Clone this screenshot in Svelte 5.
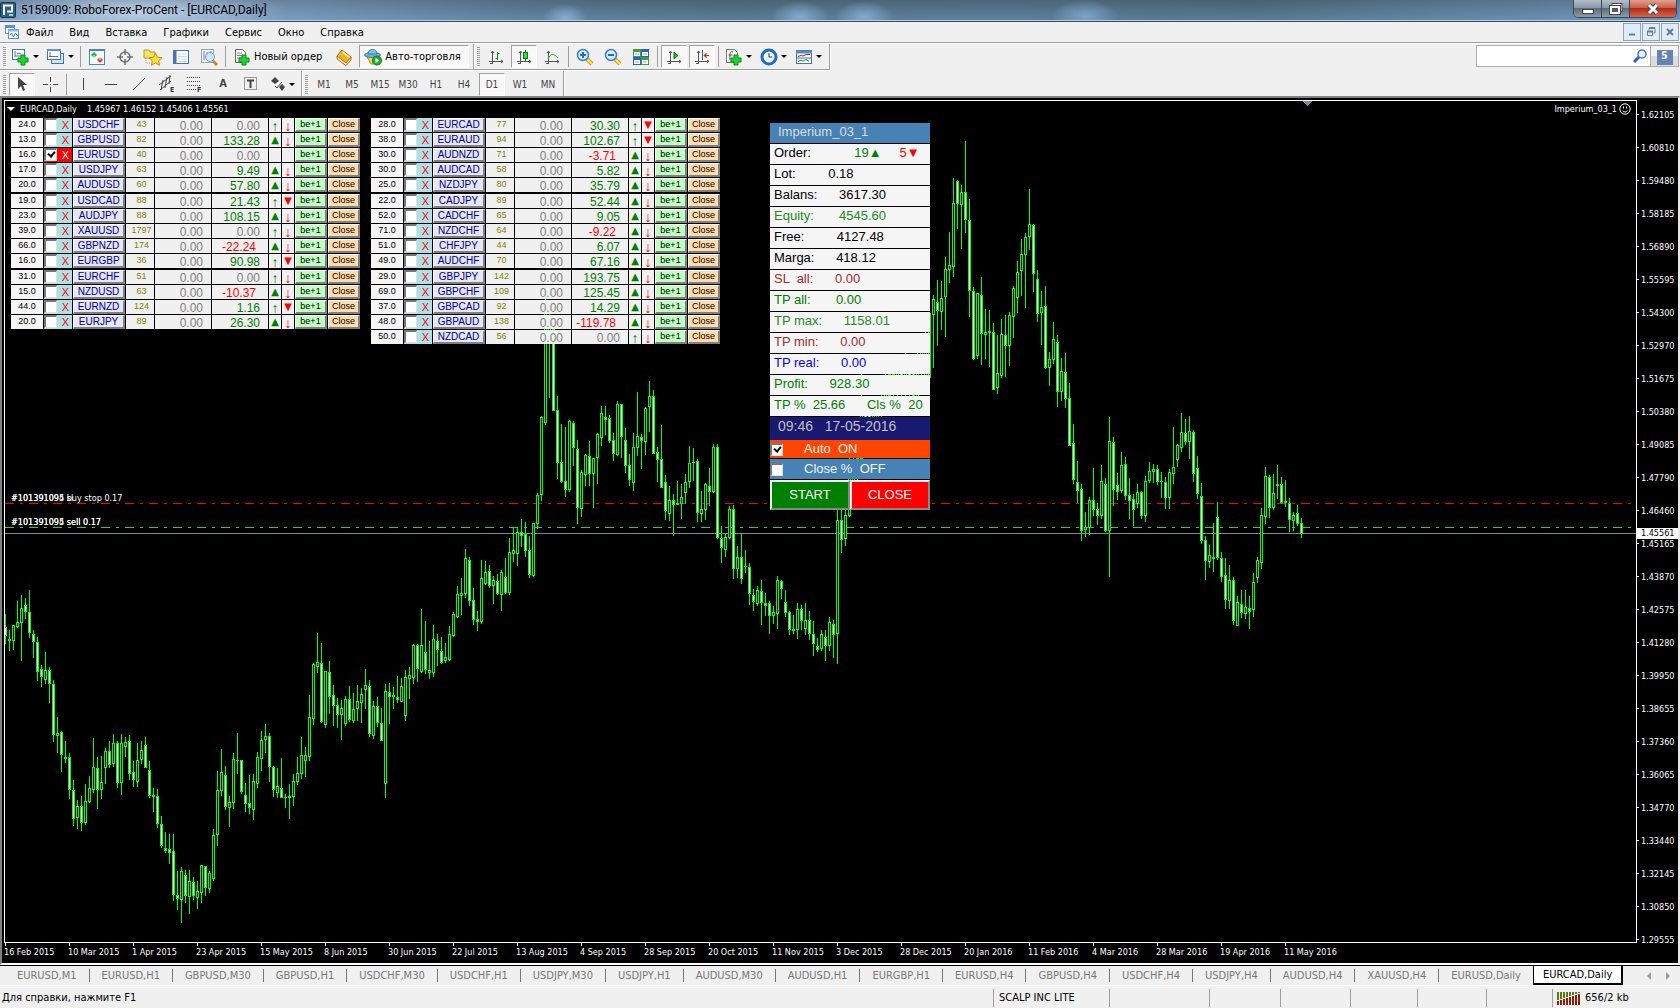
<script lang="ts">
  type Pair = {
    dist: string;
    name: string;
    spread: number;
    profit: string;
    buy: boolean;
    sell: boolean;
    checked?: boolean;
  };

  // dist, symbol, spread, profit, arrows: B = buy open, S = sell open, - = none
  const parse = (src: string): Pair[] =>
    src
      .trim()
      .split("\n")
      .map((line) => {
        const [dist, name, spread, profit, side] = line.trim().split(" ");
        return {
          dist,
          name,
          spread: Number(spread),
          profit,
          buy: side === "B",
          sell: side === "S",
          checked: side === "x",
        };
      });

  const left = parse(`
    24.0 USDCHF 43 0.00 -
    13.0 GBPUSD 82 133.28 B
    16.0 EURUSD 40 0.00 x
    17.0 USDJPY 63 9.49 B
    20.0 AUDUSD 60 57.80 B
    19.0 USDCAD 88 21.43 S
    23.0 AUDJPY 88 108.15 B
    39.0 XAUUSD 1797 0.00 -
    66.0 GBPNZD 174 -22.24 B
    16.0 EURGBP 36 90.98 S
    31.0 EURCHF 51 0.00 -
    15.0 NZDUSD 63 -10.37 B
    44.0 EURNZD 124 1.16 S
    20.0 EURJPY 89 26.30 B`);
  const right = parse(`
    28.0 EURCAD 77 30.30 S
    38.0 EURAUD 94 102.67 S
    30.0 AUDNZD 71 -3.71 B
    30.0 AUDCAD 58 5.82 B
    25.0 NZDJPY 80 35.79 B
    22.0 CADJPY 89 52.44 B
    52.0 CADCHF 65 9.05 B
    71.0 NZDCHF 64 -9.22 B
    51.0 CHFJPY 44 6.07 B
    49.0 AUDCHF 70 67.16 B
    29.0 GBPJPY 142 193.75 B
    69.0 GBPCHF 109 125.45 B
    37.0 GBPCAD 92 14.29 B
    48.0 GBPAUD 138 -119.78 B
    50.0 NZDCAD 56 0.00 -`);
  const tables = [left, right];

  const stats = [
    { text: "Lot:         0.18", color: "black" },
    { text: "Balans:      3617.30", color: "black" },
    { text: "Equity:       4545.60", color: "forest" },
    { text: "Free:         4127.48", color: "black" },
    { text: "Marga:      418.12", color: "black" },
    { text: "SL  all:      0.00", color: "brown" },
    { text: "TP all:       0.00", color: "green" },
    { text: "TP max:      1158.01", color: "forest" },
    { text: "TP min:      0.00", color: "brown" },
    { text: "TP real:      0.00", color: "blue" },
    { text: "Profit:      928.30", color: "green" },
    { text: "TP %  25.66      Cls %  20", color: "green" },
  ];

  const menu = ["Файл", "Вид", "Вставка", "Графики", "Сервис", "Окно", "Справка"];
  const frames = ["M1", "M5", "M15", "M30", "H1", "H4", "D1", "W1", "MN"];
  const tabs = [
    "EURUSD,M1", "EURUSD,H1", "GBPUSD,M30", "GBPUSD,H1", "USDCHF,M30", "USDCHF,H1",
    "USDJPY,M30", "USDJPY,H1", "AUDUSD,M30", "AUDUSD,H1", "EURGBP,H1", "EURUSD,H4",
    "GBPUSD,H4", "USDCHF,H4", "USDJPY,H4", "AUDUSD,H4", "XAUUSD,H4", "EURUSD,Daily",
    "EURCAD,Daily",
  ];
  const prices = [
    "1.62105", "1.60810", "1.59480", "1.58185", "1.56890", "1.55595", "1.54300",
    "1.52970", "1.51675", "1.50380", "1.49085", "1.47790", "1.46460", "1.45165",
    "1.43870", "1.42575", "1.41280", "1.39950", "1.38655", "1.37360", "1.36065",
    "1.34770", "1.33440", "1.32145", "1.30850", "1.29555",
  ];
  const dates = [
    "16 Feb 2015", "10 Mar 2015", "1 Apr 2015", "23 Apr 2015", "15 May 2015",
    "8 Jun 2015", "30 Jun 2015", "22 Jul 2015", "13 Aug 2015", "4 Sep 2015",
    "28 Sep 2015", "20 Oct 2015", "11 Nov 2015", "3 Dec 2015", "28 Dec 2015",
    "20 Jan 2016", "11 Feb 2016", "4 Mar 2016", "28 Mar 2016", "19 Apr 2016",
    "11 May 2016",
  ];
  const cells = [100, 71, 70, 67, 69, 66];

  // high, body top, body bottom, low, 1 = falling bar
  const history = `
614 627 636 644 1,630 639 641 651 0,625 625 641 650 0,601 622 627 628 0,595 608 623 661 0
598 605 612 619 1,590 612 633 638 1,630 634 642 658 1,637 642 672 681 1,665 669 677 687 1
652 670 680 684 0,667 670 684 703 1,680 684 735 742 1,717 733 736 753 0,731 732 755 772 1
741 757 759 763 0,753 757 790 799 1,780 790 819 826 1,800 806 818 829 0,796 806 823 831 1
784 801 823 825 0,776 788 802 803 0,738 767 790 793 0,757 768 790 809 1,756 782 790 799 0
748 751 768 784 0,741 751 765 768 1,734 743 764 767 0,741 743 783 788 1,734 743 783 795 0
737 742 747 757 0,735 741 774 780 1,761 772 780 787 1,743 760 782 787 0,741 750 760 764 0
737 745 768 768 1,761 770 796 798 1,788 795 797 812 0,789 796 824 828 1,816 824 846 848 1
832 848 851 853 1,834 849 853 864 1,834 851 895 901 1,871 895 899 910 1,867 871 900 923 0
870 875 896 903 1,870 881 897 914 0,877 882 896 900 1,881 891 898 909 0,865 865 893 903 0
866 866 888 896 1,871 873 889 893 0,829 835 879 881 0,771 790 835 846 0,749 772 791 796 0
766 775 807 810 1,796 802 808 827 0,753 759 803 809 0,733 760 761 774 0,760 760 792 794 1
783 795 804 812 1,775 803 808 814 1,774 781 810 820 0,752 757 784 788 0,731 740 759 771 0
724 736 740 753 0,733 736 767 782 1,766 767 790 797 1,768 786 793 798 0,758 788 798 798 1
794 797 798 808 0,784 796 798 819 0,774 781 797 806 0,757 773 782 785 0,737 755 774 779 0
747 755 761 777 0,695 717 757 761 0,663 664 719 725 0,633 662 667 673 0,643 663 722 723 1
671 671 725 728 0,661 672 697 714 1,685 695 706 726 1,698 705 715 728 1,700 708 715 740 0
696 699 724 726 0,686 699 720 722 1,693 709 721 723 0,685 701 709 721 0,688 694 703 723 0
669 685 690 709 0,680 686 734 737 1,701 706 736 739 0,697 706 723 727 1,708 723 741 741 1
684 691 784 798 0,683 692 697 724 1,687 695 697 709 0,676 697 700 703 1,678 686 702 702 0
670 677 716 721 0,667 675 679 699 0,644 645 678 684 0,644 645 669 682 1,609 645 672 673 0
621 652 670 674 1,641 670 673 679 0,625 639 673 677 0,634 641 650 666 1,637 651 663 664 1
643 657 661 663 0,626 634 660 661 0,612 614 636 637 0,586 594 617 618 0,578 593 596 615 0
549 558 594 598 0,557 560 601 606 1,588 600 620 625 1,611 619 622 631 1,560 578 622 624 0
561 572 584 585 0,565 571 586 588 1,576 580 586 604 0,574 581 594 595 1,570 572 595 611 0
558 577 593 594 1,538 552 593 595 0,527 550 554 562 0,527 532 554 566 0,519 532 536 547 1
522 534 551 557 1,536 550 575 578 1,523 523 576 577 0,493 495 524 529 0,416 417 495 501 0
299 312 423 425 0,312 315 340 398 0,318 329 411 411 1,396 410 463 479 1,424 462 482 483 1
427 481 490 497 1,420 421 490 492 0,421 423 448 466 1,440 449 508 524 1,470 472 509 517 0
454 455 475 486 0,441 456 474 486 1,458 458 474 508 0,433 434 458 484 0,406 413 438 446 0
406 417 420 435 1,415 418 441 443 1,433 440 454 461 1,401 404 455 456 0,404 404 437 458 1
428 440 466 473 1,454 465 480 486 1,433 447 483 491 0,392 436 448 456 0,434 437 441 469 1
407 408 442 455 0,381 396 407 432 0,390 396 454 454 1,447 452 460 482 1,425 459 488 488 1
475 482 511 520 1,486 500 514 521 0,494 500 505 536 1,481 503 505 505 0,484 497 504 519 0
474 482 493 504 0,446 463 482 488 0,448 462 463 481 0,459 461 513 522 1,491 509 514 522 0
483 484 510 520 0,468 486 492 506 1,444 447 492 493 0,444 447 538 539 1,526 538 548 563 1
533 537 550 557 0,506 509 538 539 0,505 509 569 579 1,546 557 569 578 0,533 557 579 584 1
550 566 567 573 0,563 567 594 605 1,589 595 602 611 1,586 590 604 606 0,580 591 603 625 1
593 603 606 616 1,601 603 616 634 1,606 612 616 624 0,576 580 614 629 0,580 581 589 599 1
590 602 613 617 1,611 612 630 635 1,615 629 631 634 0,603 609 630 639 0,605 609 621 630 1
603 620 629 635 0,611 620 634 640 1,621 634 644 656 1,638 646 650 652 1,630 634 649 651 0
630 637 646 661 1,617 622 646 651 0,620 624 635 658 1,505 520 634 664 0,500 520 540 553 1
508 515 539 546 0,450 478 516 517 0,457 460 483 490 0,456 458 470 480 1,372 414 459 470 0
408 412 430 440 1,405 414 428 436 1,402 410 426 432 0,397 404 418 425 0,392 398 416 424 1
370 376 404 412 0,371 374 396 403 1,366 374 392 398 0,368 373 390 396 0,360 372 388 397 1
352 370 392 400 0,356 366 390 396 1,362 372 396 404 1,350 360 398 409 0,346 352 372 395 0
330 340 378 392 0,313 313 378 378 0,295 299 315 368 0,280 302 311 346 1,281 298 312 330 0
257 269 297 337 0,232 265 270 283 0,178 203 267 277 0,180 181 204 229 1,185 192 205 249 0
141 192 220 233 1,199 220 291 317 1,287 291 359 360 1,293 293 356 359 0,277 295 334 365 1
309 332 335 359 0,310 331 333 367 1,323 332 390 390 1,335 373 388 394 0,319 334 376 378 0
315 335 346 377 1,312 315 346 366 0,286 288 317 338 0,261 272 298 313 0,239 254 271 296 0
233 237 255 308 0,189 224 237 250 0,224 225 274 292 1,270 279 314 322 1,291 307 313 345 0
286 306 368 369 1,352 359 368 386 0,322 339 360 364 0,335 342 392 407 1,358 371 392 401 0
353 372 399 408 1,383 398 446 446 1,424 443 480 484 1,461 482 491 503 1,484 489 531 541 1
512 527 530 537 0,497 500 528 535 0,468 500 510 516 1,503 509 516 525 1,465 481 516 519 0
478 484 531 532 1,417 441 531 577 0,437 442 490 506 1,473 485 492 500 1,452 465 491 493 0
457 464 496 500 1,478 495 501 519 1,494 499 510 526 1,484 492 504 508 0,491 492 516 519 1
476 481 516 522 0,462 471 481 483 0,464 469 472 483 0,465 469 482 485 1,472 481 482 498 0
477 482 498 509 1,469 472 498 509 0,427 467 474 484 0,444 445 460 467 0,413 432 448 452 0
419 433 442 445 1,416 431 442 459 0,430 432 474 482 1,456 468 494 499 1,483 496 541 544 1
536 540 561 580 1,545 555 562 568 0,523 557 559 572 0,502 517 558 560 1,552 558 577 582 1
558 575 600 609 1,565 580 601 609 0,577 580 621 625 1,596 602 626 626 0,590 604 613 618 1
590 607 614 619 0,596 608 612 629 1,573 582 610 617 0,557 560 578 583 0,508 515 563 569 0
467 476 517 524 0,475 477 508 518 1,474 493 508 510 0,465 484 486 499 0,477 484 503 504 1
480 501 503 507 0,498 503 520 532 1,512 515 521 531 0,505 513 524 526 1,518 523 534 538 1`;
  const top = 101;
  const candles = history
    .trim()
    .split(/[,\n]/)
    .map((c, i) => {
      const [high, open, close, low, down] = c.split(" ").map(Number);
      return { x: i * 4, high: high - top, open: open - top, close: close - top, low: low - top, down };
    });

  let auto = $state(true);
  let closePct = $state(false);
  let frame = $state("D1");
  let tab = $state("EURCAD,Daily");

  const tone = (p: string) => (p === "0.00" ? "zero" : p.startsWith("-") ? "loss" : "gain");
</script>

{#snippet axes()}
  <path d="M4.5 2v13M1 12.500h14M3 4l1.500-2 1.500 2M13 11l2 1.500-2 1.500M2 14.500h2" fill="none" stroke="#555" />
{/snippet}

{#snippet plus()}
  <path d="M9 7h4v3h3v4h-3v3H9v-3H6v-4h3z" fill="#1fd42f" stroke="#078a12" />
{/snippet}

<div class="app">
  <header class="title">
    <svg width="16" height="18" viewBox="0 0 16 18">
      <rect x="0.500" y="1.500" width="15" height="15" rx="1" fill="#2e6285" stroke="#163a55" />
      <path d="M4 14V4.500h8v6H7" fill="none" stroke="#fff" stroke-width="2" />
      <path d="M9 14h4" stroke="#9cc" stroke-width="2" />
    </svg>
    <h1>5159009: RoboForex-ProCent - [EURCAD,Daily]</h1>
    <div class="sysbuttons">
      <button aria-label="Minimize">
        <svg width="12" height="12"><rect x="0.500" y="6.500" width="11" height="4" fill="#fff" stroke="#445" /></svg>
      </button>
      <button aria-label="Restore">
        <svg width="14" height="12">
          <rect x="4" y="1.500" width="8" height="6" fill="none" stroke="#445" stroke-width="3" />
          <rect x="4" y="1.500" width="8" height="6" fill="none" stroke="#fff" />
          <rect x="2" y="4" width="8" height="6" fill="#667" stroke="#445" stroke-width="4" />
          <rect x="2" y="4" width="8" height="6" fill="#556" stroke="#fff" stroke-width="2" />
        </svg>
      </button>
      <button class="quit" aria-label="Close window">
        <svg width="14" height="12">
          <path d="M3 2l8 8M11 2l-8 8" stroke="#445" stroke-width="5" />
          <path d="M3 2l8 8M11 2l-8 8" stroke="#fff" stroke-width="3" />
        </svg>
      </button>
    </div>
  </header>

  <nav class="menubar">
    <svg width="16" height="16">
      <rect x="1.500" y="1.500" width="9" height="8" fill="#fff" stroke="#5b8fd6" />
      <path d="M1 3h10" stroke="#5b8fd6" stroke-width="2" />
      <rect x="4.500" y="5.500" width="10" height="9" fill="#fff" stroke="#5b8fd6" />
      <path d="M4 6.500h11" stroke="#8cb4ea" stroke-width="2" />
      <path d="M6 11l1.500-2 2 4 2-4 2 3" fill="none" stroke="#3a72c4" />
    </svg>
    {#each menu as item}
      <button>{item}</button>
    {/each}
    <div class="mdi">
      <button aria-label="Minimize chart"><svg width="10" height="10"><path d="M2 7.500h6" stroke="#6c7d8c" stroke-width="2" /></svg></button>
      <button aria-label="Restore chart">
        <svg width="10" height="10">
          <path d="M3 3V1.500h6V6H7.500M1.500 4.500h5v4h-5z" fill="none" stroke="#6c7d8c" />
          <path d="M3 1h6M1 4.500h6" stroke="#6c7d8c" stroke-width="2" />
        </svg>
      </button>
      <button aria-label="Close chart"><svg width="10" height="10"><path d="M2 2l6 6M8 2L2 8" stroke="#6c7d8c" stroke-width="2" /></svg></button>
    </div>
  </nav>

  <div class="tools">
    <div class="bars">
      <div class="bar">
        <i class="grip"></i>
        <button class="drop" aria-label="New chart">
          <svg width="18" height="18">
            <rect x="0.500" y="1.500" width="12" height="10" fill="#fff" stroke="#3f77b5" />
            <path d="M3 3v6M3 8h8M5 6l2-1 2 1" stroke="#579" fill="none" />
            {@render plus()}
          </svg>
        </button>
        <button class="drop" aria-label="Profiles">
          <svg width="18" height="18">
            <rect x="4.500" y="5.500" width="12" height="10" fill="#cfe2f7" stroke="#3f77b5" />
            <rect x="0.500" y="1.500" width="13" height="10" fill="#fff" stroke="#3f77b5" />
            <path d="M0 2h14" stroke="#5d96d3" stroke-width="2" />
            <path d="M3 4v5M2 8.500h9" stroke="#579" />
          </svg>
        </button>
        <i class="sep"></i>
        <button aria-label="Market Watch">
          <svg width="18" height="18">
            <rect x="1.500" y="1.500" width="15" height="15" fill="#f5faff" stroke="#4a86c5" />
            <path d="M1 2h16" stroke="#4a86c5" stroke-width="2" />
            <path d="M6 4l3 3-3 3-3-3z" fill="#1eb32a" />
            <path d="M12 9l3 3-3 3-3-3z" fill="#e0402a" />
            <path d="M6 7v3M12 9v3" stroke="#fff" />
          </svg>
        </button>
        <button aria-label="Data Window">
          <svg width="18" height="18">
            <circle cx="9" cy="9" r="5" fill="none" stroke="#707070" stroke-width="1.500" />
            <path d="M9 1v6M9 11v6M1 9h6M11 9h6" stroke="#707070" stroke-width="1.500" />
          </svg>
        </button>
        <button aria-label="Navigator">
          <svg width="20" height="18">
            <path d="M1 2h5l1 2h5v6H1z" fill="#fbe36a" stroke="#c49a1c" />
            <path d="M3 10v5h5" stroke="#999" fill="none" stroke-dasharray="1 1" />
            <path d="M12.500 5l2 4.200 4.500.5-3.300 3.100.9 4.500-4.100-2.300-4.100 2.300.9-4.500L6 9.700l4.500-.5z" fill="#ffdf3c" stroke="#c48c0c" />
          </svg>
        </button>
        <button aria-label="Terminal">
          <svg width="18" height="18">
            <rect x="1.500" y="2.500" width="15" height="13" fill="#fff" stroke="#3f77b5" />
            <path d="M3 2.500v13" stroke="#3f77b5" stroke-width="3" />
            <path d="M6 6h9M6 8.500h9M6 11h9M6 13.500h9" stroke="#ccd9ea" />
            <path d="M2.500 5h1M2.500 8h1" stroke="#e44" />
          </svg>
        </button>
        <button aria-label="Strategy Tester">
          <svg width="18" height="18">
            <rect x="1.500" y="1.500" width="12" height="13" fill="#f2f2f2" stroke="#9aa" />
            <path d="M4 3v9M7 4v6M11 3v8" stroke="#789" />
            <path d="M13 13l4 4" stroke="#c98a1e" stroke-width="3" />
            <circle cx="10" cy="9" r="4.500" fill="#cfe6fb" fill-opacity=".85" stroke="#6c9fd0" />
          </svg>
        </button>
        <i class="sep"></i>
        <button class="wide">
          <svg width="18" height="18">
            <path d="M2.500 1.500h7l3 3v10h-10z" fill="#fff" stroke="#666" />
            <path d="M4 5h5M4 7.500h6M4 10h5" stroke="#888" />
            {@render plus()}
          </svg>
          Новый ордер
        </button>
        <button aria-label="MetaEditor">
          <svg width="18" height="18">
            <path d="M2 8v3l9 6.500 5-5.500V9" fill="#fff1c4" stroke="#a8700e" />
            <path d="M7 2l9 7-5 6-9-7z" fill="#eeb02c" stroke="#a8700e" />
            <path d="M7.500 4l7 5.500" stroke="#ffe28a" stroke-width="2" />
          </svg>
        </button>
        <button class="wide pressed">
          <svg width="18" height="18">
            <path d="M2 7h13l-5 9H7z" fill="#f7cf52" stroke="#b98a18" />
            <ellipse cx="8.500" cy="7" rx="8" ry="2.500" fill="#6ab0dc" stroke="#3a7dab" />
            <path d="M4 6c0-6 9-6 9 0z" fill="#7fc0e8" stroke="#3a7dab" />
            <circle cx="13" cy="12.500" r="4.500" fill="#22b02c" stroke="#0c7a15" />
            <path d="M11.500 10l4 2.500-4 2.500z" fill="#fff" />
          </svg>
          Авто-торговля
        </button>
      </div>
      <div class="bar">
        <i class="grip"></i>
        <button aria-label="Bar chart">
          <svg width="16" height="16">{@render axes()}<path d="M9.500 3v8M9.500 4.500h2M7.500 9.500h2" stroke="#0a8a12" /></svg>
        </button>
        <button class="pressed" aria-label="Candlesticks">
          <svg width="16" height="16">{@render axes()}<path d="M9.500 1v11" stroke="#0a7a12" /><rect x="7.500" y="3.500" width="4" height="6" fill="#2fe040" stroke="#0a7a12" /></svg>
        </button>
        <button aria-label="Line chart">
          <svg width="16" height="16">{@render axes()}<path d="M4 10c3-6 5-6 10-1" fill="none" stroke="#2a9a32" /></svg>
        </button>
        <i class="sep"></i>
        <button aria-label="Zoom in">
          <svg width="18" height="18"><path d="M11 11l5 5" stroke="#c9a012" stroke-width="4" /><path d="M11 11l5 5" stroke="#ffe36a" stroke-width="2" /><circle cx="7" cy="7" r="5.500" fill="#d4ecff" stroke="#3b7fc4" stroke-width="1.500" /><path d="M4 7h6M7 4v6" stroke="#2a6cb4" stroke-width="2" /></svg>
        </button>
        <button aria-label="Zoom out">
          <svg width="18" height="18"><path d="M11 11l5 5" stroke="#c9a012" stroke-width="4" /><path d="M11 11l5 5" stroke="#ffe36a" stroke-width="2" /><circle cx="7" cy="7" r="5.500" fill="#d4ecff" stroke="#3b7fc4" stroke-width="1.500" /><path d="M4 7h6" stroke="#2a6cb4" stroke-width="2" /></svg>
        </button>
        <button aria-label="Tile windows">
          <svg width="16" height="16">
            <path d="M0 0h8v8H0zM8 8h8v8H8z" fill="#3fa02c" /><path d="M8 0h8v8H8zM0 8h8v8H0z" fill="#2a62c8" />
            <path d="M1 3h6v4H1zM9 3h6v4H9zM1 11h6v4H1zM9 11h6v4H9z" fill="#fff" />
            <path d="M2 5h4M10 5h4M2 13h4M10 13h4" stroke="#9ac" />
          </svg>
        </button>
        <i class="sep"></i>
        <button class="pressed" aria-label="Auto scroll">
          <svg width="16" height="16">{@render axes()}<path d="M8 3v7l4-3.500z" fill="#1fc02c" stroke="#0a7a12" /></svg>
        </button>
        <button class="pressed" aria-label="Chart shift">
          <svg width="16" height="16">{@render axes()}<path d="M8.500 1v10" stroke="#25629c" /><path d="M10 6.500h5M12.500 4l-2.500 2.500 2.500 2.500" stroke="#d03010" fill="#d03010" /></svg>
        </button>
        <i class="sep"></i>
        <button class="drop" aria-label="Indicators">
          <svg width="18" height="18">
            <path d="M1.500 1.500h8l3 3v10h-11z" fill="#fff" stroke="#777" />
            <path d="M8 4c-2-1-3 0-3 2v6M3.500 7h4" fill="none" stroke="#555" />
            {@render plus()}
          </svg>
        </button>
        <button class="drop" aria-label="Periods">
          <svg width="18" height="18"><circle cx="9" cy="9" r="7" fill="#eef6ff" stroke="#1e6cc0" stroke-width="3" /><path d="M9 5v4h3" fill="none" stroke="#333" /></svg>
        </button>
        <button class="drop" aria-label="Templates">
          <svg width="18" height="18">
            <rect x="1.500" y="2.500" width="15" height="13" fill="#fff" stroke="#3f77b5" />
            <path d="M1 4h16" stroke="#4f8dd0" stroke-width="3" /><path d="M2 10h14" stroke="#3f77b5" />
            <path d="M3 8.500l3-1 2 .5 3-1.500h4" fill="none" stroke="#a02818" /><path d="M3 14l3-2 2 1 3-1.500 3 2" fill="none" stroke="#1a8a2a" />
          </svg>
        </button>
      </div>
    </div>
    <div class="bars second">
      <div class="bar">
        <i class="grip"></i>
        <button class="pressed" aria-label="Cursor"><svg width="16" height="16"><path d="M4 1v12l3-3 2 5 2-1-2-5h4z" fill="#444" /></svg></button>
        <button aria-label="Crosshair"><svg width="16" height="16"><path d="M8.500 1v5M8.500 11v5M1 8.500h5M11 8.500h5M8 8.500h1" stroke="#444" /></svg></button>
        <i class="sep"></i>
        <button aria-label="Vertical line"><svg width="16" height="16"><path d="M8.500 2v12" stroke="#444" /></svg></button>
        <button aria-label="Horizontal line"><svg width="16" height="16"><path d="M2 8.500h12" stroke="#444" /></svg></button>
        <button aria-label="Trend line"><svg width="16" height="16"><path d="M2 14L14 2" stroke="#444" /></svg></button>
        <button aria-label="Channel">
          <svg width="18" height="18">
            <path d="M1 10L13 1M2 15L13 6M5 5l-2 10M9 2L7 13M12 0l-1 9" stroke="#444" />
            <text x="12" y="17">E</text>
          </svg>
        </button>
        <button aria-label="Fibonacci">
          <svg width="18" height="18">
            <path d="M1 2.500h14M1 6.500h14M1 10.500h14M1 14.500h9" stroke="#444" stroke-dasharray="1 1" />
            <text x="11" y="17">F</text>
          </svg>
        </button>
        <button class="glyph">A</button>
        <button aria-label="Text label">
          <svg width="16" height="16">
            <rect x="1.500" y="1.500" width="12" height="12" fill="none" stroke="#444" stroke-dasharray="1 1" />
            <path d="M4 4.500h7M7.500 4v8" stroke="#444" stroke-width="2" />
          </svg>
        </button>
        <button class="drop" aria-label="Arrows">
          <svg width="16" height="16"><path d="M5 1l4 4-4 3-4-3zM12 8l3 3-3 4-3-4z" fill="#444" /><path d="M5 10l2 2 5-6" fill="none" stroke="#444" /></svg>
        </button>
      </div>
      <div class="bar">
        <i class="grip"></i>
        {#each frames as f}
          <button class="period" class:pressed={f === frame} onclick={() => (frame = f)}>{f}</button>
        {/each}
      </div>
    </div>
    <div class="search">
      <input type="text" aria-label="Search" />
      <svg width="14" height="14"><path d="M1 13l5-5" stroke="#2a5ad0" stroke-width="3" /><circle cx="9" cy="5" r="4" fill="#eaf3ff" stroke="#3a78d8" stroke-width="1.500" /></svg>
      <button aria-label="Messages"><b>5</b></button>
    </div>
  </div>

  <main class="chart">
    <div class="plot">
      <svg class="canvas" width="100%" height="100%" shape-rendering="crispEdges">
        <path d="M1298 0h9l-4.500 5z" fill="#778899" />
        <rect y="432" width="100%" height="1" fill="#778899" />
        <line x1="0" x2="100%" y1="402.500" y2="402.500" stroke="#ff0000" stroke-dasharray="9 6 3 6" />
        <line x1="0" x2="100%" y1="426.500" y2="426.500" stroke="#32cd32" stroke-dasharray="9 6 3 6" />
        {#each candles as c}
          <rect x={c.x} y={c.high} width="1" height={c.low - c.high} fill="#0f0" />
          <rect x={c.x - 1} y={c.open} width="3" height={Math.max(c.close - c.open, 1)} fill="#0f0" />
          {#if c.close - c.open > 2}
            <rect x={c.x} y={c.open + 1} width="1" height={c.close - c.open - 2} fill={c.down ? "#fff" : "#000"} />
          {/if}
        {/each}
        <g fill="#fff">
          <text x="6" y="400">#101391094 sl</text>
          <text x="6" y="400">#101391095 buy stop 0.17</text>
          <text x="6" y="424">#101391094 sell 0.17</text>
          <text x="6" y="424">#101391095 sell 0.17</text>
        </g>
      </svg>

      <div class="caption">
        <span class="tri"></span>
        <span>EURCAD,Daily&nbsp;&nbsp;&nbsp; 1.45967 1.46152 1.45406 1.45561</span>
        <span class="expert">Imperium_03_1</span>
        <svg width="12" height="12" fill="none" stroke="#fff"><circle cx="6" cy="6" r="5.200" /><path d="M3.500 7.500c1 2 4 2 5 0M4.500 3.500v2M7.500 3.500v2" /></svg>
      </div>

      <div class="overlay">
        {#each tables as rows}
          <table>
            <colgroup>
              <col class="w32" /><col class="w28" /><col class="w52" /><col class="w28" /><col class="w56" />
              <col class="w56" /><col class="w12" /><col class="w12" /><col class="w32" /><col class="w32" />
            </colgroup>
            <tbody>
              {#each rows as r (r.name)}
                <tr class:on={r.checked}>
                  <td class="dist">{r.dist}</td>
                  <td>
                    <div class="pick">
                      <input type="checkbox" bind:checked={r.checked} aria-label={r.name} />
                      <button>X</button>
                    </div>
                  </td>
                  <td><button class="sym">{r.name}</button></td>
                  <td class="spread">{r.spread}</td>
                  <td class="num zero">0.00</td>
                  <td class="num {tone(r.profit)}">{r.profit}</td>
                  <td class="arr up" class:big={r.buy}>{r.checked ? "" : r.buy ? "▲" : "↑"}</td>
                  <td class="arr down" class:big={r.sell}>{r.checked ? "" : r.sell ? "▼" : "↓"}</td>
                  <td><button class="be">be+1</button></td>
                  <td><button class="cls">Close</button></td>
                </tr>
              {/each}
            </tbody>
          </table>
        {/each}

        <section class="panel">
          <h2>Imperium_03_1</h2>
          <p>{"Order:            "}<span class="green">19▲</span>{"     "}<span class="red">5▼</span></p>
          {#each stats as s}
            <p class={s.color}>{s.text}</p>
          {/each}
          <time>{"09:46   17-05-2016"}</time>
          <label class="auto"><input type="checkbox" bind:checked={auto} /><span>{"Auto  " + (auto ? "ON" : "OFF")}</span></label>
          <label class="pct"><input type="checkbox" bind:checked={closePct} /><span>{"Close %  " + (closePct ? "ON" : "OFF")}</span></label>
          <div class="actions">
            <button class="start">START</button>
            <button class="stop">CLOSE</button>
          </div>
        </section>
      </div>
    </div>

    <ul class="prices">
      {#each prices as p}
        <li>{p}</li>
      {/each}
    </ul>
    <span class="now">1.45561</span>

    <ul class="dates">
      {#each dates as d}
        <li>{d}</li>
      {/each}
    </ul>
  </main>

  <nav class="tabs">
    {#each tabs as t}
      <button class:active={t === tab} onclick={() => (tab = t)}>{t}</button>
    {/each}
    <div class="scroll">
      <svg width="5" height="8"><path d="M4 0v8L0 4z" fill="#999" /></svg>
      <svg width="5" height="8"><path d="M0 0v8l4-4z" fill="#999" /></svg>
    </div>
  </nav>

  <footer>
    <span class="help">Для справки, нажмите F1</span>
    <span class="profile">SCALP INC LITE</span>
    {#each cells as w}
      <span style="width: {w}px"></span>
    {/each}
    <span class="net">
      <svg width="24" height="13" shape-rendering="crispEdges">
        {#each [0, 3, 6, 9, 12, 15, 18, 21] as x, i}
          <rect {x} y="0" width="2" height={8 - i} fill="#5a7a10" />
          <rect {x} y={9 - i} width="2" height={4 + i} fill="#9a1a08" />
        {/each}
      </svg>
      656/2 kb
    </span>
  </footer>
</div>

<style>
  :global(body) {
    background: #f0f0f0;
  }

  .app {
    display: flex;
    flex-direction: column;
    min-height: 100vh;
    overflow: hidden;
    background: #f0f0f0;
    color: #000;
    font: 11px/14px "DejaVu Sans Condensed", "DejaVu Sans", sans-serif;
  }

  button {
    margin: 0;
    padding: 0;
    border: 0;
    background: none;
    color: inherit;
    font: inherit;
  }

  ul,
  p,
  h1,
  h2 {
    margin: 0;
    padding: 0;
    list-style: none;
    font-weight: normal;
  }

  svg {
    display: block;
    flex: none;
  }

  .title {
    display: flex;
    align-items: center;
    gap: 5px;
    height: 20px;
    border-bottom: 1px solid #b8cbe0;
    box-shadow: 0 1px #3c4a5a;
    margin-bottom: 1px;
    background:
      radial-gradient(ellipse 150px 24px at 140px 12px, rgba(205, 222, 240, 0.8), transparent),
      radial-gradient(ellipse 22px 14px at 565px 18px, rgba(147, 185, 224, 0.8), transparent),
      radial-gradient(ellipse 30px 16px at 800px 17px, rgba(143, 182, 222, 0.8), transparent),
      radial-gradient(ellipse 30px 16px at 864px 17px, rgba(143, 182, 222, 0.8), transparent),
      radial-gradient(ellipse 34px 16px at 1085px 16px, rgba(134, 173, 214, 0.8), transparent),
      linear-gradient(rgba(60, 75, 85, 0.35), rgba(110, 150, 195, 0.35)),
      linear-gradient(90deg, #86a8cc, #7f9fc2 300px, #5d7c98 520px, #507080 720px, #56758f 1000px, #4d6c7c 1250px, #6e93b8 1600px);
  }

  h1 {
    font: 12px/18px Roboto, sans-serif;
  }

  .sysbuttons {
    display: flex;
    align-self: flex-start;
    margin: 0 3px 0 auto;
    border: 1px solid #3b4652;
    border-top: 0;
    border-radius: 0 0 5px 5px;
    overflow: hidden;
  }

  .sysbuttons button {
    display: grid;
    place-items: center;
    width: 28px;
    height: 17px;
    border-right: 1px solid #3b4652;
    background: linear-gradient(#b4bfca, #8b98a6 45%, #5f6d7c 50%, #8d9cab);
  }

  .sysbuttons .quit {
    width: 46px;
    border: 0;
    background: linear-gradient(#e0a090, #c9604c 45%, #b02a12 50%, #d8684a);
  }

  .menubar {
    display: flex;
    align-items: center;
    height: 20px;
    padding: 0 1px 0 4px;
    border-bottom: 1px solid #a0a0a0;
  }

  .menubar > svg {
    margin-right: -2px;
  }

  .menubar > button {
    padding: 1px 8px 0;
  }

  .mdi {
    display: flex;
    gap: 1px;
    margin-left: auto;
  }

  .mdi button {
    display: grid;
    place-items: center;
    width: 18px;
    height: 18px;
    border: 1px solid #8fa5b8;
    background: #dfebf7;
  }

  .tools {
    position: relative;
    border-top: 1px solid #fff;
  }

  .bars {
    display: flex;
    height: 27px;
  }

  .second {
    height: 25px;
  }

  .bar {
    display: flex;
    align-items: center;
    box-sizing: border-box;
    height: 26px;
    padding-right: 3px;
    border-right: 1px solid #a0a0a0;
    border-bottom: 1px solid #a0a0a0;
    box-shadow: 1px 1px #fff;
  }

  .second .bar {
    height: 25px;
    padding: 1px 1px 0 0;
    border-bottom: 0;
  }

  .grip {
    width: 3px;
    height: 19px;
    margin: 0 2px 0 3px;
    background: repeating-linear-gradient(#a0a0a0 0 1px, transparent 1px 2px);
  }

  .sep {
    width: 1px;
    height: 21px;
    margin: 0 2px;
    background: #a0a0a0;
  }

  .bar button {
    display: flex;
    align-items: center;
    justify-content: center;
    width: 26px;
    height: 23px;
    margin: 0 1px;
    box-sizing: border-box;
  }

  .bar .drop {
    width: 33px;
    gap: 3px;
  }

  .drop::after {
    content: "";
    border: 3px solid transparent;
    border-top-color: #000;
    border-bottom: 0;
  }

  .bar .wide {
    width: auto;
    gap: 3px;
    padding: 0 7px 0 4px;
  }

  .bar .pressed {
    border: 1px solid #a0a0a0;
    border-right-color: #fff;
    border-bottom-color: #fff;
    background: #f8f8f8;
  }

  .bar .glyph {
    color: #444;
    font-weight: bold;
  }

  .bar .period {
    padding-top: 1px;
    color: #444;
    font-size: 10px;
  }

  .bar text {
    font: bold 7px "DejaVu Sans Condensed", sans-serif;
    fill: #333;
  }

  .search {
    position: absolute;
    top: 1px;
    right: 1px;
    display: flex;
    align-items: center;
    border: 1px solid #adadad;
    background: #fff;
  }

  .search input {
    width: 156px;
    height: 20px;
    padding: 0;
    border: 0;
    outline: 0;
  }

  .search button {
    width: 28px;
    height: 20px;
    margin-left: 3px;
    border-left: 1px solid #adadad;
    background: linear-gradient(#f4f4f4 50%, #dcdcdc 50%);
  }

  .search b {
    display: block;
    width: 16px;
    margin: 0 auto;
    background: #6484b4;
    color: #fff;
    font: bold 10px/12px "DejaVu Sans Condensed", sans-serif;
  }

  .search b::after {
    content: "";
    display: block;
    width: 0;
    height: 0;
    margin: 0 0 -3px 3px;
    border: solid transparent;
    border-width: 0 0 3px 4px;
    border-top: 3px solid #6484b4;
    border-bottom: 0;
  }

  .chart {
    position: relative;
    flex: 1;
    display: grid;
    grid-template-columns: 1fr 41px;
    grid-template-rows: 1fr 20px;
    padding: 2px 0 0 2px;
    border: 2px solid #808080;
    border-right-color: #e8e8e8;
    border-bottom-color: #fff;
    background: #000;
    color: #fff;
    font-size: 9px;
  }

  .plot {
    position: relative;
    min-height: 720px;
    border: 1px solid #fff;
  }

  .canvas {
    position: absolute;
    inset: 0;
    overflow: hidden;
  }

  .caption {
    position: relative;
    display: flex;
    align-items: center;
    gap: 5px;
    height: 16px;
    padding: 0 5px 0 2px;
  }

  .expert {
    margin-left: auto;
  }

  .caption svg {
    margin-left: -3px;
  }

  .tri {
    border: 4px solid transparent;
    border-top-color: #fff;
    border-bottom: 0;
  }

  .overlay {
    position: relative;
    display: flex;
    align-items: flex-start;
    gap: 9px;
    padding-left: 5px;
    font-family: "Liberation Sans", Arial, sans-serif;
  }

  table {
    table-layout: fixed;
    width: 351px;
    border-spacing: 1px;
    color: #000;
    line-height: 11px;
  }

  .w12 { width: 12px; }
  .w28 { width: 28px; }
  .w32 { width: 32px; }
  .w52 { width: 52px; }
  .w56 { width: 56px; }

  td {
    height: 14px;
    padding: 0;
    box-sizing: border-box;
    overflow: hidden;
    background: #f0f0f0 padding-box;
    text-align: center;
    vertical-align: top;
    white-space: nowrap;
  }

  tr:nth-child(5n) td {
    height: 15px;
    border-bottom: 1px solid transparent;
  }

  tr:last-child td {
    height: 14px;
    border: 0;
  }

  td button {
    display: block;
    width: 100%;
    height: 14px;
    border: 1px solid #fff;
    border-right: 2px solid #808080;
    border-bottom: 2px solid #808080;
    line-height: 11px;
  }

  .dist {
    padding-top: 1px;
    background-color: #f5f5f5;
  }

  .pick {
    display: flex;
    background: #b0e0e6;
  }

  .pick button {
    flex: 1;
    padding-left: 2px;
    border: 0;
    color: #f00;
    font-size: 11px;
    line-height: 14px;
  }

  .on .pick {
    background: #f00;
  }

  .on .pick button {
    color: #fff;
  }

  input[type="checkbox"] {
    appearance: none;
    flex: none;
    width: 13px;
    height: 13px;
    margin: 0;
    border: 1px solid #e0e0e0;
    border-top: 2px solid #777;
    border-left: 2px solid #777;
    background: #fff;
  }

  input[type="checkbox"]:checked::after {
    content: "";
    display: block;
    width: 3px;
    height: 5px;
    margin: 0 0 0 3px;
    border: solid #000;
    border-width: 0 2px 2px 0;
    transform: rotate(40deg);
  }

  .sym {
    background: #e6e6fa;
    color: #000080;
    font-size: 10px;
  }

  .be {
    background: #bfffbf;
  }

  .cls {
    background: #ffdaab;
  }

  .spread {
    padding: 1px 0 0 3px;
    color: #808000;
  }

  .num {
    padding: 3px 8px 0 0;
    font-size: 12px;
    text-align: right;
  }

  .zero { color: #808080; }
  .gain { color: #008000; }
  .loss { padding-right: 12px; color: #f00; }

  .arr {
    padding-top: 3px;
    font-size: 14px;
  }

  .big {
    padding-top: 1px;
    font-family: "DejaVu Sans", sans-serif;
    font-size: 10px;
  }

  .up { color: #008000; }
  .down { color: #f00; }

  .panel {
    display: flex;
    flex-direction: column;
    gap: 1px;
    width: 160px;
    margin: 6px 0 0 40px;
    color: #000;
    font-size: 13px;
    line-height: 18px;
    white-space: pre;
  }

  .panel h2 {
    height: 20px;
    padding-left: 8px;
    background: #4682b4;
    color: #dcdcdc;
    font-size: 13px;
  }

  .panel p {
    height: 20px;
    padding-left: 4px;
    background: #f5f5f5;
  }

  .panel .green { color: #008000; }
  .panel .forest { color: #228b22; }
  .panel .brown { color: #a52a2a; }
  .panel .blue { color: #0000ff; }
  .panel .red { color: #f00; }

  time {
    height: 23px;
    margin-bottom: -1px;
    padding-left: 8px;
    background: #191970;
    color: #c0c0c0;
    font-size: 14px;
  }

  .panel label {
    display: flex;
    align-items: center;
    gap: 21px;
    color: #f5f5f5;
  }

  .auto {
    height: 18px;
    background: #ff4500;
  }

  .pct {
    height: 20px;
    background: #4682b4;
  }

  .actions {
    display: flex;
  }

  .actions button {
    flex: 1;
    height: 30px;
    border: 2px solid #f0f0f0;
    border-right-color: #888;
    border-bottom-color: #888;
    color: #fff;
  }

  .start { background: #008000; }
  .stop { background: #f00; }

  .prices {
    margin-top: -2px;
  }

  .prices li {
    display: flex;
    align-items: center;
    gap: 2px;
    height: 33px;
  }

  .prices li::before {
    content: "";
    width: 2px;
    height: 1px;
    background: #fff;
  }

  .now {
    position: absolute;
    top: 430px;
    right: 0;
    width: 37px;
    padding-left: 4px;
    background: #fff;
    color: #000;
    line-height: 11px;
  }

  .prices,
  .dates {
    height: 0;
  }

  .dates {
    display: flex;
    white-space: nowrap;
    line-height: 12px;
  }

  .dates li {
    flex: none;
    width: 64px;
  }

  .dates li::before {
    content: "";
    display: block;
    width: 1px;
    height: 3px;
    margin-left: 1px;
    background: #fff;
  }

  .tabs {
    display: flex;
    align-items: center;
    height: 19px;
    padding-left: 5px;
    border-top: 1px solid #000;
    border-bottom: 1px solid #fff;
    color: #777;
  }

  .tabs button {
    padding: 0 12px;
    border-right: 1px solid #777;
    line-height: 13px;
    white-space: nowrap;
  }

  .tabs .active {
    height: 19px;
    margin-top: -1px;
    padding: 0 9px;
    border: 1px solid #000;
    border-top: 0;
    border-bottom-width: 2px;
    border-right-width: 2px;
    background: #fff;
    color: #000;
  }

  .tabs button:nth-last-child(3) {
    border-right: 0;
  }

  .scroll {
    display: flex;
    gap: 14px;
    margin: 0 9px 0 auto;
  }

  footer {
    display: flex;
    align-items: stretch;
    height: 22px;
  }

  footer span {
    box-sizing: border-box;
    margin: 3px 0 1px;
    border-left: 1px solid #a0a0a0;
    line-height: 18px;
  }

  footer .help {
    flex: 1;
    padding-left: 2px;
    border: 0;
  }

  .profile {
    width: 116px;
    padding-left: 5px;
  }

  .net {
    display: flex;
    align-items: center;
    gap: 4px;
    width: 128px;
    padding-left: 4px;
  }
</style>
